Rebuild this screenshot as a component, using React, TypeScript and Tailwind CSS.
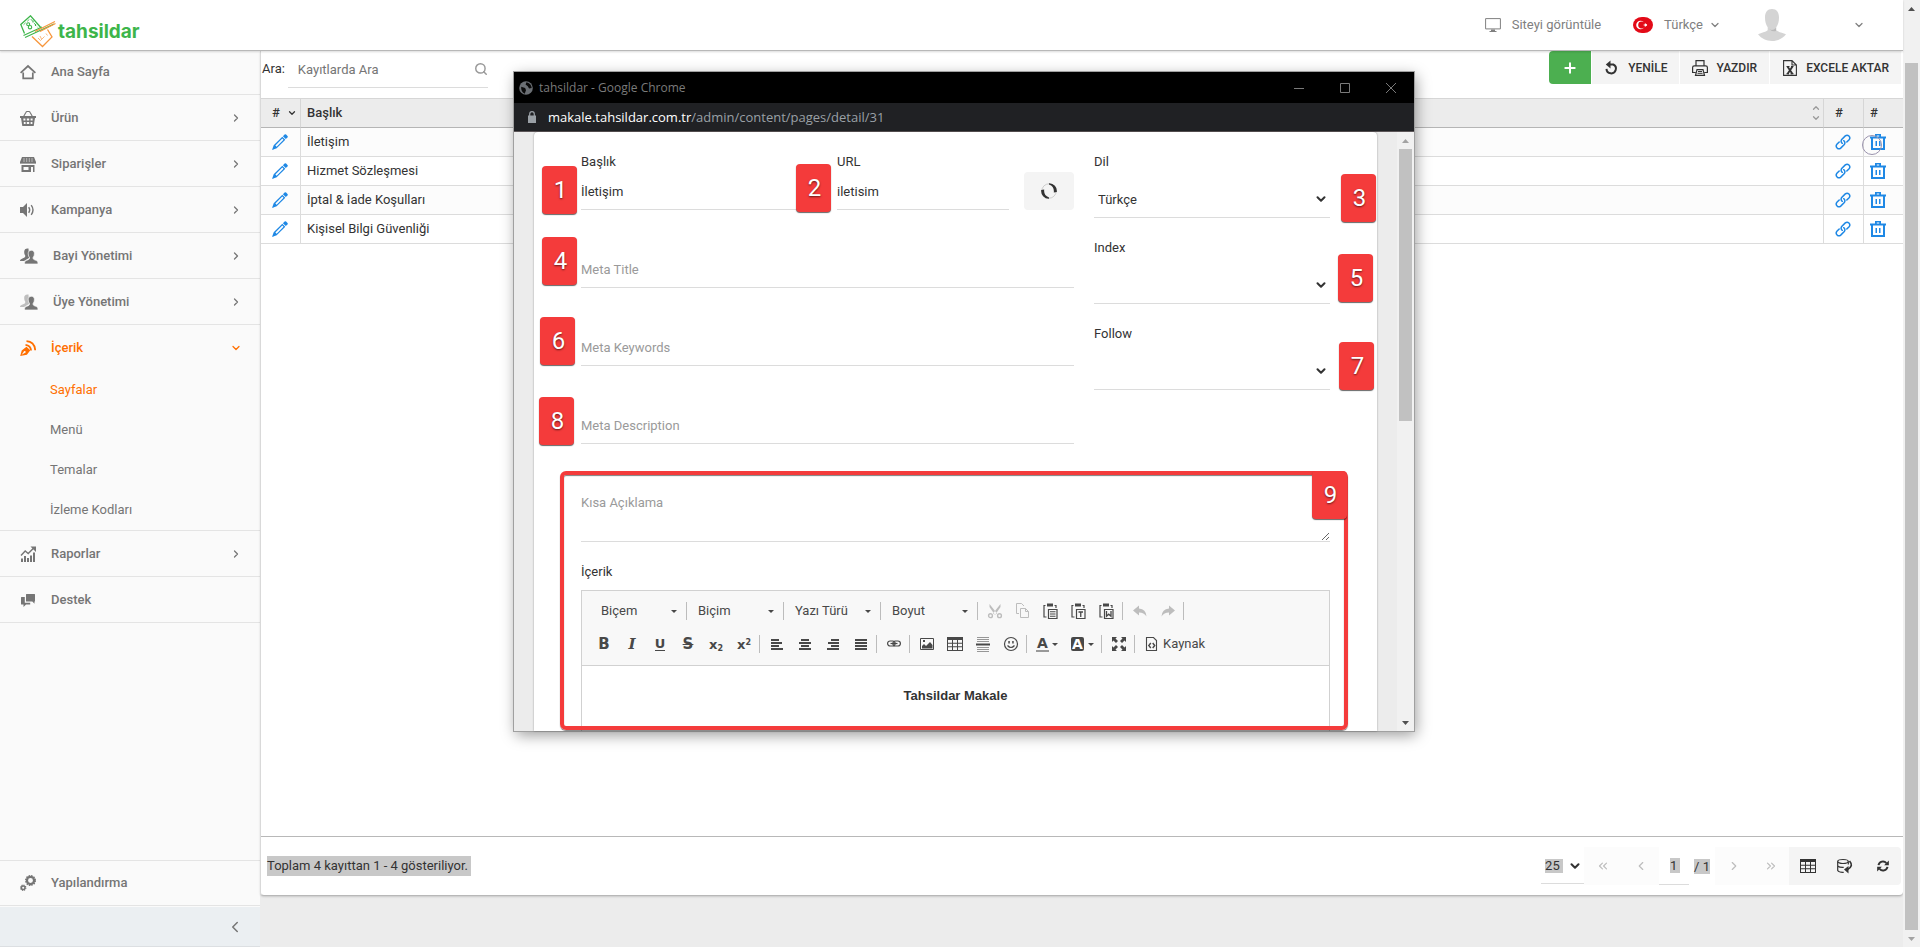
import type { ReactNode } from 'react'
import { ChevronDown, ChevronLeft, ChevronRight, ChevronsLeft, ChevronsRight, ChevronUp, Plus, Search } from 'lucide-react'
import { clsx } from 'clsx'

function Svg({ className = 'size-4', children }: { className?: string; children: ReactNode }) {
  return (
    <svg viewBox="0 0 16 16" className={clsx('shrink-0', className)} fill="currentColor" aria-hidden="true">
      {children}
    </svg>
  )
}

/* ---------- sidebar icons ---------- */

const HomeIcon = () => (
  <Svg>
    <path d="M.6 8.800 8 2l7.400 6.800M3.200 8.500v5.900h9.600V8.500" fill="none" stroke="currentColor" strokeWidth="1.700" />
  </Svg>
)

const BasketIcon = () => (
  <Svg>
    <path d="M3.600 6.500 6 2.200Q6.300 1.500 7 1.500h2q.7 0 1 .7l2.400 4.300" fill="none" stroke="currentColor" strokeWidth="1.100" />
    <path fillRule="evenodd" d="M0 6h16v2h-1l-1.300 8H2.300L1 8H0zM3.400 8.600v1.800h2V8.600zm3.400 0v1.800h2.400V8.600zm3.800 0v1.800h2V8.600zM3.800 12v2h1.800v-2zm3 0v2h2.400v-2zm3.800 0v2h1.800v-2z" />
  </Svg>
)

const StoreIcon = () => (
  <Svg>
    <path d="M2 1h12l2 5v1.200q-1 1-2 0-1 1-2 0-1 1-2 0-1 1-2 0-1 1-2 0-1 1-2 0-1 1-2 0-1 1-2 0V6z" />
    <path fillRule="evenodd" d="M1.500 9h13v7h-13zM3.500 11v3h5v-3zM11 11v5h2v-5z" />
    <path d="M4 2v4M6.700 2v4M9.300 2v4M12 2v4" stroke="#fafafa" strokeWidth=".5" />
  </Svg>
)

const SpeakerIcon = () => (
  <Svg>
    <path d="M0 5h3l4-4v14l-4-4H0z" />
    <path d="M8.700 5.200q2 2.800 0 5.600M11.200 3.200q3.600 4.800 0 9.600" fill="none" stroke="currentColor" strokeWidth="1.400" />
  </Svg>
)

function UsersIcon({ faded }: { faded?: boolean }) {
  return (
    <svg viewBox="0 0 18 16" className="h-4 w-[18px] shrink-0" fill="currentColor" aria-hidden="true">
      <path opacity={faded ? 0.45 : 1} d="M8.500.5C5.800 0 4 1.500 4.200 4c0 1.500.4 2.700 1 3.400.4 1.600-.4 2.300-3.200 3.300-1.500.5-2 1.200-2 2.300h4l5-3z" />
      <path stroke="#fafafa" strokeWidth=".7" d="M11.300 2.300c2.200 0 3.200 1.500 3.100 3.500 0 1.500-.5 2.900-1.300 3.700-.2 1.500.4 2 2.700 2.800 1.700.7 2.200 1.500 2.200 3.700H4.500c0-2.200.5-3 2.200-3.700 2.400-.8 3-1.300 2.800-2.800-.8-.8-1.300-2.200-1.300-3.700-.1-2 .9-3.500 3.100-3.500z" />
    </svg>
  )
}

const ContentIcon = () => (
  <Svg>
    <path fillRule="evenodd" d="m.2 15.900 1.500-5.400 4.800-3.800 3.800 3.600-3.400 4.500zM3.700 11.800l-2 3 3-1.900a1 1 0 1 0-1-1.100z" />
    <path d="M5.500 4.800q5.200.7 5.600 5.700M6.500 1.200q8 .6 8.700 9" fill="none" stroke="currentColor" strokeWidth="1.800" />
  </Svg>
)

const ReportsIcon = () => (
  <Svg>
    <path d="M1 9.500 5.200 5l3 2.500L14 1.800" fill="none" stroke="currentColor" strokeWidth="1.400" />
    <path d="M10.500.500H16V6zM1 12.500h2V16H1zM4 10h2v6H4zM7 12h2v4H7zM10 9.500h2V16h-2zM13 6.500h2V16h-2z" />
  </Svg>
)

const SupportIcon = () => (
  <Svg>
    <path d="M6.500 2h8q.5 0 .5.500v6.500q0 .500-.500.500v2.200L12.300 9.500H6.500Q6 9.500 6 9V2.500Q6 2 6.500 2z" />
    <path d="M1.500 5h3.300v5.700h5.400v1.800H6L3.500 15v-2.500h-2Q1 12.500 1 12V5.500Q1 5 1.500 5z" />
  </Svg>
)

const GearsIcon = () => (
  <Svg>
    <circle cx="10.500" cy="5.500" r="3.600" fill="none" stroke="currentColor" strokeWidth="2.300" />
    <circle cx="10.500" cy="5.500" r="4.800" fill="none" stroke="currentColor" strokeWidth="1.400" strokeDasharray="1.500 1.013" />
    <circle cx="3.200" cy="12.700" r="1.800" fill="none" stroke="currentColor" strokeWidth="1.500" />
    <circle cx="3.200" cy="12.700" r="2.600" fill="none" stroke="currentColor" strokeWidth="1.200" strokeDasharray="1.100 .942" />
  </Svg>
)

/* ---------- header and toolbar icons ---------- */

function Logo() {
  return (
    <svg viewBox="0 0 36 33" className="h-[33px] w-9" fill="none" aria-hidden="true">
      <path d="M4.500 18.500.8 9.500 10.500.8l10 11.500" stroke="#3db54a" strokeWidth="1.300" />
      <path d="M3.500 9.800 10.300 3.500l7.500 9" stroke="#3db54a" strokeWidth=".8" strokeDasharray="3 2" />
      <circle cx="8.200" cy="9.300" r="1.500" stroke="#3db54a" strokeWidth="1.100" />
      <circle cx="10" cy="12.200" r="1.700" stroke="#3db54a" strokeWidth="1.100" />
      <path d="M13 5.500v2M15.500 9v2M3.500 20.500 22 12M5 22.500 34 9" stroke="#3db54a" strokeWidth="1.100" />
      <path d="M15 16.500 35 6.500M20 16.500l15.500-8" stroke="#f7963c" strokeWidth="1.200" />
      <path d="m12 21.500 10.500 10L32 22l-4.500-7.500" stroke="#f7963c" strokeWidth="1.300" />
      <path d="m18 23 2.500 2.500 4-4M20 21l1.500 3M26 18.500l1.500 2" stroke="#f9b87d" strokeWidth="1" />
    </svg>
  )
}

const MonitorIcon = () => (
  <Svg>
    <path d="M.6 1.600h14.800v10.300H.6z" fill="none" stroke="currentColor" strokeWidth="1" />
    <path d="M6 12.500h4V14h1.500v1h-7v-1H6z" />
  </Svg>
)

const FlagIcon = () => (
  <svg viewBox="0 0 20 16" className="h-4 w-5 shrink-0" aria-hidden="true">
    <rect width="20" height="16" rx="9" ry="8" fill="#e30a17" />
    <circle cx="7.500" cy="8" r="4.300" fill="#fff" />
    <circle cx="8.600" cy="8" r="3.400" fill="#e30a17" />
    <path d="m10 8 2-.7.2-1.200.8 1 1.200-.2-.7 1.100.7 1.100-1.200-.2-.8 1-.2-1.200z" fill="#fff" />
  </svg>
)

const Avatar = () => (
  <svg viewBox="0 0 28 32" className="h-8 w-7 shrink-0" fill="#d4d4d4" aria-hidden="true">
    <path d="M14 0c4.600 0 7 3.200 7 8.500 0 4-1 7.500-2.700 9.800v3c2 1.900 6.200 2.200 9.700 4C24.500 29.800 19.500 32 14 32S3.500 29.800 0 25.300c3.500-1.800 7.700-2.100 9.700-4v-3C8 16 7 12.500 7 8.500 7 3.200 9.400 0 14 0z" />
    <path d="M10.500 19.500q3.500 3 7.500-.5v3q-4 1-7.500-2.500z" fill="#b9b9b9" />
  </svg>
)

const UndoIcon = () => (
  <Svg>
    <path d="M5 4.500h4.300a4.700 4.700 0 1 1-6.800 4.400" fill="none" stroke="currentColor" strokeWidth="2" />
    <path d="M6.500.500v8L1.800 4.500z" />
  </Svg>
)

const PrinterIcon = () => (
  <Svg>
    <path d="M4 5.500V.6h8v4.900M3.500 12.500H.6V7.500q0-1.700 1.700-1.700h11.400q1.700 0 1.700 1.700v5h-2.900M3.500 15.400 5 9.700h6l1.500 5.700z" fill="none" stroke="currentColor" strokeWidth="1.200" />
    <path d="M6 11.500h4M5.500 13.300h5" stroke="currentColor" strokeWidth="1" />
  </Svg>
)

const ExcelIcon = () => (
  <Svg>
    <path d="M1.600.6H10l4.400 4.400v10.400H1.600zM10 .6v4.400h4.400" fill="none" stroke="currentColor" strokeWidth="1.100" />
    <path d="m5.500 6.500 5 7.500M10.500 6.500l-5 7.500" stroke="currentColor" strokeWidth="1.900" />
    <path d="M4.500 6.500h3M9 6.500h2.500M4.500 13.800h2.500M8.500 13.800h3" stroke="currentColor" strokeWidth="1" />
  </Svg>
)

const PencilIcon = () => (
  <Svg>
    <path d="m10.900 2.200 1.700-1.700q.7-.7 1.500 0l1.400 1.400q.7.8 0 1.500l-1.700 1.700z" />
    <path fillRule="evenodd" d="m10.300 2.700 3 3-8.600 8.600L0 16l1.700-4.700zm0 1.900-6.900 6.900 1.200 1.200 6.900-6.900z" />
  </Svg>
)

const LinkIcon = () => (
  <Svg>
    <g fill="none" stroke="currentColor" strokeWidth="1.500" strokeLinecap="round">
      <path d="M7.300 9.300a2.600 2.600 0 0 1-.6-3.800l3.600-3.600a2.700 2.700 0 0 1 3.800 3.800l-2.300 2.300" />
      <path d="M8.700 6.700a2.600 2.600 0 0 1 .6 3.800l-3.600 3.600a2.700 2.700 0 0 1-3.800-3.800L4.200 8" />
    </g>
  </Svg>
)

const TrashIcon = () => (
  <Svg>
    <path fillRule="evenodd" d="M5 0h6v2.500h5v2h-1V16H1V4.500H0v-2h5zm1.800 1.500v1h2.400v-1zM3 4.500V14h10V4.500z" />
    <path d="M5.500 7H7v5H5.500zM9 7h1.500v5H9z" />
  </Svg>
)

const GridIcon = () => (
  <Svg>
    <path fillRule="evenodd" d="M0 1h16v14H0zm1 3v2.700h4V4zm5 0v2.700h4V4zm5 0v2.700h4V4zM1 7.700v2.600h4V7.700zm5 0v2.600h4V7.700zm5 0v2.600h4V7.700zM1 11.300V14h4v-2.700zm5 0V14h4v-2.700zm5 0V14h4v-2.700z" />
  </Svg>
)

const DatabaseIcon = () => (
  <Svg>
    <ellipse cx="6" cy="3.500" rx="5.300" ry="2" fill="none" stroke="currentColor" strokeWidth="1.200" />
    <path d="M.7 3.500v9q1.300 2 6 1.800M.7 8q2 1.700 6 1.400M11.300 3.500v3" fill="none" stroke="currentColor" strokeWidth="1.200" />
    <path d="M12.500 3q4.500 5-2 8.500" fill="none" stroke="currentColor" strokeWidth="1.800" />
    <path d="M7 11.500 11.500 8v7.500z" />
  </Svg>
)

const RefreshIcon = () => (
  <Svg className="size-3">
    <path d="M2 6.800a6 6 0 0 1 10.500-2.600M14 9.200a6 6 0 0 1-10.500 2.600" fill="none" stroke="currentColor" strokeWidth="2.600" />
    <path d="M15.800.8v6.200H9.500zM.2 15.200V9h6.300z" />
  </Svg>
)

/* ---------- editor icons ---------- */

const CutIcon = () => (
  <Svg>
    <path d="m2.500 1 7.500 9.500-2 1.500L2.500 4zM13.500 1 6 10.500 8 12l5.500-8z" />
    <circle cx="3.500" cy="12.700" r="1.900" fill="none" stroke="currentColor" strokeWidth="1.400" />
    <circle cx="12.500" cy="12.700" r="1.900" fill="none" stroke="currentColor" strokeWidth="1.400" />
  </Svg>
)

const CopyIcon = () => (
  <Svg>
    <path d="M4 10.500H1.500v-10h5L9 3M5.500 5.500h5l3 3v6h-8zM10.500 5.500v3h3" fill="none" stroke="currentColor" strokeWidth="1" />
  </Svg>
)

function PasteIcon({ children }: { children: ReactNode }) {
  return (
    <Svg>
      <path d="M4 .5h6v3H4z" />
      <path d="M2.500 2.500H1v11.500h2.500M11.500 2.500H13V5M5.500 6.500H14v9H5.500z" fill="none" stroke="currentColor" strokeWidth="1.200" />
      {children}
    </Svg>
  )
}

const UndoArrow = ({ flip }: { flip?: boolean }) => (
  <Svg className={flip ? 'size-4 -scale-x-100' : 'size-4'}>
    <path d="M1 7.500 7 2.500v3q7 .5 7.500 8Q12 9.500 7 9.500v3z" />
  </Svg>
)

function Letter({ children, className = "font-['DejaVu_Sans'] text-[15px]" }: { children: ReactNode; className?: string }) {
  return <span className={clsx('leading-none font-bold', className)}>{children}</span>
}

function AlignIcon({ d }: { d: string }) {
  return (
    <Svg>
      <path d={d} stroke="currentColor" strokeWidth="2" />
    </Svg>
  )
}

const ChainIcon = () => (
  <Svg>
    <rect x="1.600" y="5" width="7.500" height="5" rx="2.500" fill="none" stroke="currentColor" strokeWidth="1.200" />
    <rect x="6.900" y="5" width="7.500" height="5" rx="2.500" fill="none" stroke="currentColor" strokeWidth="1.200" />
    <path d="M4.500 7.500h7" stroke="currentColor" strokeWidth="1.200" />
  </Svg>
)

const ImageIcon = () => (
  <Svg>
    <path d="M1.500 2.500h13v11h-13z" fill="none" stroke="currentColor" strokeWidth="1" />
    <path d="M3 12.500V10l2-2 2 2 4-4 2.500 3v3.500zM4 4h2v2H4z" />
  </Svg>
)

const RuleIcon = () => (
  <Svg>
    <path d="M2 1.500h12M2 3.500h12M2 5.500h12M2 11.500h12M2 13.500h12M2 15.500h12" stroke="currentColor" strokeWidth="1" opacity=".55" />
    <path d="M1 8.500h14" stroke="currentColor" strokeWidth="2" />
  </Svg>
)

const SmileIcon = () => (
  <Svg>
    <circle cx="8" cy="8" r="6.500" fill="none" stroke="currentColor" strokeWidth="1.200" />
    <path d="M5.300 5h1.500v2.500H5.300zM9.200 5h1.500v2.500H9.200z" />
    <path d="M4.500 9.500q3.500 4 7 0" fill="none" stroke="currentColor" strokeWidth="1.200" />
  </Svg>
)

const MaximizeIcon = () => (
  <Svg>
    <path d="M1 1h5L4.500 2.500 7 5 5 7 2.500 4.500 1 6zM15 1h-5l1.500 1.500L9 5l2 2 2.500-2.500L15 6zM1 15h5l-1.500-1.500L7 11 5 9l-2.500 2.500L1 10zM15 15h-5l1.500-1.500L9 11l2-2 2.500 2.500L15 10z" />
  </Svg>
)

const SourceIcon = () => (
  <Svg>
    <path d="M2.500 1.500h7l3 3v10h-10z" fill="none" stroke="currentColor" strokeWidth="1.100" />
    <path d="M6.800 7 4.800 9.500l2 2.500M8.700 7l2 2.500-2 2.500" fill="none" stroke="currentColor" strokeWidth="1.400" />
  </Svg>
)

const SpinIcon = () => (
  <Svg>
    <circle cx="8" cy="8" r="7.200" fill="none" stroke="#c4c4c4" strokeWidth=".8" />
    <path d="M8 .3A7.700 7.700 0 0 1 15.800 9l-3 .5Q13.500 3.500 8 1.500zM8 15.700A7.700 7.700 0 0 1 .2 7l3-.5Q2.500 12.500 8 14.500z" />
  </Svg>
)

const Caret = () => (
  <svg viewBox="0 0 6 3" className="h-[3px] w-1.5 shrink-0" fill="currentColor" aria-hidden="true">
    <path d="M0 0h6L3 3z" />
  </svg>
)

/* ---------- page ---------- */

interface MenuItem {
  label: string
  icon: ReactNode
  sub?: boolean
}

const topMenu: MenuItem[] = [
  { label: 'Ana Sayfa', icon: <HomeIcon /> },
  { label: 'Ürün', icon: <BasketIcon />, sub: true },
  { label: 'Siparişler', icon: <StoreIcon />, sub: true },
  { label: 'Kampanya', icon: <SpeakerIcon />, sub: true },
  { label: 'Bayi Yönetimi', icon: <UsersIcon />, sub: true },
  { label: 'Üye Yönetimi', icon: <UsersIcon faded />, sub: true },
]

const contentMenu = ['Sayfalar', 'Menü', 'Temalar', 'İzleme Kodları']

const pages = ['İletişim', 'Hizmet Sözleşmesi', 'İptal & İade Koşulları', 'Kişisel Bilgi Güvenliği']

function MenuRow({ item, className = 'h-[46px]' }: { item: MenuItem; className?: string }) {
  return (
    <a href="#" className={clsx('flex items-center gap-[15px] border-b border-[#e4e4e4] pr-[18px] pl-5 font-medium', className)}>
      {item.icon}
      <span className="flex-1">{item.label}</span>
      {item.sub && <ChevronRight className="size-3" strokeWidth={2.5} />}
    </a>
  )
}

function Sidebar() {
  return (
    <aside className="flex w-[260px] shrink-0 flex-col bg-[#fafafa] text-[#757575]">
      <nav>
        {topMenu.map((item, i) => (
          <MenuRow key={item.label} item={item} className={i === 0 ? 'h-[44px] pb-0.5' : undefined} />
        ))}
        <div className="border-b border-[#e4e4e4]">
          <a href="#" className="flex h-[45px] items-center gap-[15px] pr-[18px] pl-5 font-medium text-[#ff6f00]">
            <ContentIcon />
            <span className="flex-1">İçerik</span>
            <ChevronDown className="size-3" strokeWidth={2.5} />
          </a>
          {contentMenu.map((label, i) => (
            <a key={label} href="#" className={clsx('flex h-10 items-center pl-[50px]', i === 0 && 'text-[#ff6f00]')}>
              {label}
            </a>
          ))}
        </div>
        <MenuRow item={{ label: 'Raporlar', icon: <ReportsIcon />, sub: true }} />
        <MenuRow item={{ label: 'Destek', icon: <SupportIcon /> }} />
      </nav>
      <div className="mt-auto">
        <MenuRow item={{ label: 'Yapılandırma', icon: <GearsIcon /> }} className="h-[46px] border-t" />
        <button type="button" aria-label="Menüyü daralt" className="mt-px flex h-10 w-full items-center justify-end border-b border-[#dcdfe2] bg-[#ebeff2] pr-4">
          <ChevronLeft className="size-[18px]" strokeWidth={2} />
        </button>
      </div>
    </aside>
  )
}

function Header() {
  return (
    <header className="relative z-10 flex h-[51px] shrink-0 items-center border-b border-[#b8b8b8] bg-white pr-[38px] pl-5 text-[#808080] shadow-[0_1px_2px_rgba(0,0,0,0.15)]">
      <a href="#" className="flex items-center gap-0.5 pt-3">
        <Logo />
        <span className="pt-0.5 font-['Inter'] text-[19px] leading-6 font-bold text-[#3db54a]">tahsildar</span>
      </a>
      <div className="ml-auto flex items-center">
        <a href="#" className="flex items-center gap-[11px]">
          <MonitorIcon />
          Siteyi görüntüle
        </a>
        <button type="button" className="ml-8 flex items-center gap-[11px]">
          <FlagIcon />
          <span className="flex items-center gap-1.5">
            Türkçe
            <ChevronDown className="size-3" strokeWidth={2.5} />
          </span>
        </button>
        <button type="button" aria-label="Hesap" className="ml-[37px] flex items-center gap-[67px]">
          <Avatar />
          <ChevronDown className="size-3" strokeWidth={2.5} />
        </button>
      </div>
    </header>
  )
}

function ToolbarButton({ icon, label }: { icon: ReactNode; label: string }) {
  return (
    <button type="button" className="flex h-[33px] items-center gap-2 bg-[#f4f4f4] px-3 text-xs font-medium">
      {icon}
      {label}
    </button>
  )
}

function Toolbar() {
  return (
    <div className="flex h-[47px] shrink-0 items-start pr-0.5 pl-px">
      <label htmlFor="search" className="leading-9">Ara:</label>
      <div className="ml-[3px] flex h-[37px] w-[200px] items-center border-b border-[#dcdcdc]">
        <input id="search" type="text" placeholder="Kayıtlarda Ara" className="w-0 flex-1 pt-0.5 pl-2.5 outline-none placeholder:text-[#757575]" />
        <Search className="size-[14px] text-[#999]" strokeWidth={2.5} />
      </div>
      <div className="ml-auto flex gap-px">
        <button type="button" aria-label="Ekle" className="flex h-[33px] w-[42px] items-center justify-center rounded-l-sm bg-[#4caf50] text-white">
          <Plus className="size-4" strokeWidth={3} />
        </button>
        <ToolbarButton icon={<UndoIcon />} label="YENİLE" />
        <ToolbarButton icon={<PrinterIcon />} label="YAZDIR" />
        <ToolbarButton icon={<ExcelIcon />} label="EXCELE AKTAR" />
      </div>
    </div>
  )
}

function PagesTable() {
  return (
    <table className="w-full table-fixed border-separate border-spacing-0">
      <colgroup>
        <col className="w-10" />
        <col />
        <col className="w-10" />
        <col className="w-[39px]" />
      </colgroup>
      <thead>
        <tr className="bg-[#ececec] text-left [&>th]:h-[30px] [&>th]:border-t [&>th]:border-b [&>th]:border-t-[#d6d6d6] [&>th]:border-b-[#b5b5b5] [&>th]:border-r-[#d6d6d6] [&>th]:font-medium">
          <th className="border-r pr-[3px] pl-[11px]">
            <span className="flex items-center justify-between">
              #
              <ChevronDown className="size-2.5" strokeWidth={3} />
            </span>
          </th>
          <th className="border-r pr-0.5 pl-1.5">
            <span className="flex items-center justify-between">
              Başlık
              <span className="flex flex-col text-[#999]">
                <ChevronUp className="size-2.5" strokeWidth={3} />
                <ChevronDown className="size-2.5" strokeWidth={3} />
              </span>
            </span>
          </th>
          <th className="border-r pl-[11px]">#</th>
          <th className="pl-1.5">#</th>
        </tr>
      </thead>
      <tbody>
        {pages.map((title, i) => (
          <tr key={title} className="odd:bg-[#fcfcfc] [&>td]:h-[29px] [&>td]:border-b [&>td]:border-[#dcdcdc]">
            <td className="border-r pl-[11px]">
              <button type="button" aria-label="Düzenle" className="block text-[#1e88e5]"><PencilIcon /></button>
            </td>
            <td className="border-r pl-1.5">{title}</td>
            <td className="border-r pl-[11px]">
              <a href="#" aria-label="Bağlantı" className="block text-[#1e88e5]"><LinkIcon /></a>
            </td>
            <td className="relative pl-1.5">
              <button type="button" aria-label="Sil" className="block text-[#1e88e5]"><TrashIcon /></button>
              {/* busy cursor ring */}
              {i === 0 && <span className="absolute top-[7px] -left-0.5 size-5 rounded-full border border-[#9a93ad]" />}
            </td>
          </tr>
        ))}
      </tbody>
    </table>
  )
}

function Pager() {
  return (
    <div className="flex h-[38px] items-center">
      <div className="relative flex h-9 items-center border-b border-[#dcdcdc]">
        <select aria-label="Sayfa boyutu" defaultValue="25" className="h-full w-[43px] appearance-none pl-1 text-transparent outline-none">
          <option value="25">25</option>
        </select>
        <span className="pointer-events-none absolute left-1 bg-[#c8c8c8] pr-[3px] leading-[14px]">25</span>
        <ChevronDown className="pointer-events-none absolute right-0.5 size-3.5" strokeWidth={3.5} />
      </div>
      <div className="flex h-full items-center bg-[#fcfcfc] text-[#bdbdbd]">
        <button type="button" aria-label="İlk" className="flex w-[38px] justify-center"><ChevronsLeft className="size-3.5" /></button>
        <button type="button" aria-label="Önceki" className="flex w-[37px] justify-center"><ChevronLeft className="size-3.5" /></button>
      </div>
      <div className="flex h-full w-[30px] items-center justify-center border-b border-[#dcdcdc] pl-0.5">
        <span className="bg-[#c8c8c8] pr-[3px] leading-[15px]">1</span>
      </div>
      <span className="mr-[5px] ml-[5px] bg-[#c8c8c8] leading-[15px]">/ 1</span>
      <div className="flex h-full items-center bg-[#fcfcfc] text-[#bdbdbd]">
        <button type="button" aria-label="Sonraki" className="flex w-[37px] justify-center"><ChevronRight className="size-3.5" /></button>
        <button type="button" aria-label="Son" className="flex w-[37px] justify-center"><ChevronsRight className="size-3.5" /></button>
      </div>
      <div className="flex h-full items-center rounded-r-sm bg-[#f4f4f4]">
        <button type="button" aria-label="Sütunlar" className="flex w-[37px] justify-center"><GridIcon /></button>
        <button type="button" aria-label="Önbellek" className="flex w-[38px] justify-center"><DatabaseIcon /></button>
        <button type="button" aria-label="Yenile" className="flex w-[37px] justify-center"><RefreshIcon /></button>
      </div>
    </div>
  )
}

function Scrollbar({ dimUp, thumb }: { dimUp?: boolean; thumb: string }) {
  return (
    <div className="flex w-[17px] shrink-0 flex-col items-center bg-[#f1f1f1] text-[#505050]">
      <svg viewBox="0 0 17 17" className={clsx('size-[17px] shrink-0', dimUp && 'text-[#a3a3a3]')} fill="currentColor" aria-hidden="true">
        <path d="M5 11h7L8.500 7z" />
      </svg>
      <div className="flex w-full flex-1 flex-col items-center">
        <div className={clsx('w-[13px] bg-[#c1c1c1]', thumb)} />
      </div>
      <svg viewBox="0 0 17 17" className={clsx('size-[17px] shrink-0', !dimUp && 'text-[#a3a3a3]')} fill="currentColor" aria-hidden="true">
        <path d="M5 7h7l-3.500 4z" />
      </svg>
    </div>
  )
}

/* ---------- popup window ---------- */

function TextField({ id, label, value, className }: { id: string; label: string; value: string; className?: string }) {
  return (
    <div className={className}>
      <label htmlFor={id} className="block leading-5">{label}</label>
      <input id={id} type="text" defaultValue={value} className="block h-[38px] w-full border-b border-[#dcdcdc] pt-0.5 outline-none" />
    </div>
  )
}

function MetaField({ label }: { label: string }) {
  return (
    <input
      type="text"
      aria-label={label}
      placeholder={label}
      className="h-[38px] w-full border-b border-[#dcdcdc] pt-0.5 outline-none placeholder:text-[#9a9a9a]"
    />
  )
}

function SelectField({ id, label, value }: { id: string; label: string; value: string }) {
  return (
    <div>
      <label htmlFor={id} className="mb-2 block leading-5">{label}</label>
      <div className="relative">
        <select id={id} defaultValue={value} className="block h-[38px] w-full appearance-none border-b border-[#dcdcdc] bg-white pt-0.5 pl-1 outline-none">
          <option value={value}>{value}</option>
        </select>
        <ChevronDown className="pointer-events-none absolute top-3 right-0.5 size-3.5" strokeWidth={3.5} />
      </div>
    </div>
  )
}

function Tool({ label, disabled, children }: { label: string; disabled?: boolean; children: ReactNode }) {
  return (
    <button type="button" aria-label={label} disabled={disabled} className="flex w-7 items-center justify-center disabled:text-[#bdbdbd]">
      {children}
    </button>
  )
}

const Separator = () => <span className="mr-[3px] ml-px h-[18px] w-px bg-[#bcbcbc]" />

function Combo({ label }: { label: string }) {
  return (
    <>
      <button type="button" className="flex w-24 items-center justify-between pr-[9px] pl-[11px]">
        {label}
        <Caret />
      </button>
      <span className="h-[18px] w-px bg-[#bcbcbc]" />
    </>
  )
}

function Editor() {
  return (
    <div className="mt-2 border border-[#d1d1d1]">
      <div className="flex flex-col gap-[15px] border-b border-[#d1d1d1] bg-[#f8f8f8] pt-[11px] pb-3 pl-2 text-[#484848]">
        <div className="flex h-[18px] items-center">
          <Combo label="Biçem" />
          <Combo label="Biçim" />
          <Combo label="Yazı Türü" />
          <Combo label="Boyut" />
          <span className="w-[3px]" />
          <Tool label="Kes" disabled><CutIcon /></Tool>
          <Tool label="Kopyala" disabled><CopyIcon /></Tool>
          <Tool label="Yapıştır">
            <PasteIcon><path d="M7 8.800h5.500M7 11h5.500M7 13.200h5.500" stroke="currentColor" strokeWidth="1.100" /></PasteIcon>
          </Tool>
          <Tool label="Düz metin yapıştır">
            <PasteIcon><path d="M7.500 9H12M9.750 9v5" stroke="currentColor" strokeWidth="1.300" /></PasteIcon>
          </Tool>
          <Tool label="Word'den yapıştır">
            <PasteIcon><path d="M7.500 8v5.200l2.200-2 2.300 2V8" fill="none" stroke="currentColor" strokeWidth="1.300" /></PasteIcon>
          </Tool>
          <Separator />
          <Tool label="Geri al" disabled><UndoArrow /></Tool>
          <Tool label="Yinele" disabled><UndoArrow flip /></Tool>
          <Separator />
        </div>
        <div className="flex h-[18px] items-center">
          <Tool label="Kalın"><Letter>B</Letter></Tool>
          <Tool label="İtalik"><Letter className="font-['DejaVu_Serif'] text-[15px] italic">I</Letter></Tool>
          <Tool label="Altı çizili"><Letter className="border-b border-[#484848] font-['DejaVu_Sans'] text-[13px]">U</Letter></Tool>
          <Tool label="Üstü çizili"><Letter className="font-['DejaVu_Sans'] text-[15px] line-through">S</Letter></Tool>
          <Tool label="Alt simge"><Letter className="font-['DejaVu_Sans'] text-[13px]">x<sub className="text-[8px]">2</sub></Letter></Tool>
          <Tool label="Üst simge"><Letter className="font-['DejaVu_Sans'] text-[13px]">x<sup className="text-[8px]">2</sup></Letter></Tool>
          <Separator />
          <Tool label="Sola hizala"><AlignIcon d="M2 4h8M2 7h11M2 10h8M2 13h12" /></Tool>
          <Tool label="Ortala"><AlignIcon d="M4 4h8M2 7h12M4 10h8M2 13h12" /></Tool>
          <Tool label="Sağa hizala"><AlignIcon d="M6 4h8M3 7h11M6 10h8M2 13h12" /></Tool>
          <Tool label="İki yana yasla"><AlignIcon d="M2 4h12M2 7h12M2 10h12M2 13h12" /></Tool>
          <Separator />
          <Tool label="Bağlantı"><ChainIcon /></Tool>
          <Separator />
          <Tool label="Resim"><ImageIcon /></Tool>
          <Tool label="Tablo"><GridIcon /></Tool>
          <Tool label="Yatay çizgi"><RuleIcon /></Tool>
          <Tool label="İfade"><SmileIcon /></Tool>
          <Separator />
          <button type="button" aria-label="Yazı rengi" className="flex w-[35px] items-center gap-[3px] pl-1.5">
            <span className="border-b-2 border-[#999] px-px font-['DejaVu_Sans'] text-sm leading-[13px] font-bold">A</span>
            <Caret />
          </button>
          <button type="button" aria-label="Arka plan rengi" className="flex w-[35px] items-center gap-1 pl-1.5">
            <span className="rounded-xs bg-[#484848] px-px font-['DejaVu_Sans'] text-sm leading-[14px] font-bold text-white">A</span>
            <Caret />
          </button>
          <Separator />
          <Tool label="Büyüt"><MaximizeIcon /></Tool>
          <Separator />
          <button type="button" className="flex items-center gap-[3px] pl-1.5">
            <SourceIcon />
            Kaynak
          </button>
        </div>
      </div>
      <div className="h-40 pt-5 text-center font-['Liberation_Sans'] leading-5 font-bold">Tahsildar Makale</div>
    </div>
  )
}

// numbered callouts, placed over the form
const marks = [
  { n: 1, pos: 'left-7 top-[94px]' },
  { n: 2, pos: 'left-[282px] top-[92px]' },
  { n: 3, pos: 'left-[827px] top-[102px]' },
  { n: 4, pos: 'left-7 top-[165px]' },
  { n: 5, pos: 'left-[824px] top-[182px]' },
  { n: 6, pos: 'left-[26px] top-[245px]' },
  { n: 7, pos: 'left-[825px] top-[270px]' },
  { n: 8, pos: 'left-[25px] top-[325px]' },
  { n: 9, pos: 'left-[798px] top-[399px]' },
]

function PopupWindow() {
  return (
    <section className="absolute top-[72px] left-[514px] z-20 flex h-[659px] w-[900px] flex-col bg-[#ececec] shadow-[0_0_0_1px_#a0a0a0,2px_4px_14px_rgba(0,0,0,0.4)]">
      <div className="flex h-[31px] shrink-0 items-center bg-black pr-[18px] pl-[5px] font-['Open_Sans'] text-xs text-[#7a7a7a]">
        <svg viewBox="0 0 16 16" className="mr-1.5 size-3.5" aria-hidden="true">
          <circle cx="8" cy="8" r="7.800" fill="#6b6f74" />
          <path d="M2.500 6.500 7 8l1 2.500-1.500 4Q2 12 2.500 6.500zM8.500 1.500 7.500 4l2.500 2 1.500 2.500 3-.5Q14 3 8.500 1.500z" fill="#0a0a0a" />
        </svg>
        <h2 className="flex-1">tahsildar - Google Chrome</h2>
        <div className="flex items-center gap-9">
          <svg viewBox="0 0 10 10" className="size-2.5" stroke="currentColor" aria-hidden="true"><path d="M0 5.500h10" /></svg>
          <svg viewBox="0 0 10 10" className="size-2.5" stroke="currentColor" fill="none" aria-hidden="true"><path d="M.5.500h9v9h-9z" /></svg>
          <svg viewBox="0 0 10 10" className="size-2.5" stroke="currentColor" aria-hidden="true"><path d="m0 0 10 10M10 0 0 10" /></svg>
        </div>
      </div>
      <div className="flex h-[29px] shrink-0 items-center gap-3 border-b border-[#5c5658] bg-[#202124] pl-3.5 font-['Open_Sans'] text-[13px] text-[#9aa0a6]">
        <svg viewBox="0 0 8 12" className="h-3 w-2" fill="currentColor" aria-hidden="true">
          <path d="M0 4.500h8V12H0z" />
          <path d="M1.700 5V3a2.300 2.300 0 0 1 4.600 0v2" fill="none" stroke="currentColor" strokeWidth="1.200" />
        </svg>
        <p><span className="text-white">makale.tahsildar.com.tr</span>/admin/content/pages/detail/31</p>
      </div>
      <div className="flex min-h-0 flex-1">
        <form className="mx-5 min-w-0 flex-1 overflow-hidden rounded-t-sm bg-white px-[47px] pt-5 shadow-[0_0_2px_rgba(0,0,0,0.4)]">
          <div className="grid grid-cols-[1fr_236px] gap-5">
            <div className="flex min-w-0 flex-col gap-10">
              <div className="flex items-end">
                <TextField id="title" label="Başlık" value="İletişim" className="w-[236px]" />
                <TextField id="url" label="URL" value="iletisim" className="mr-[15px] ml-5 min-w-0 flex-1" />
                <button type="button" aria-label="URL oluştur" className="flex h-[38px] w-[50px] items-center justify-center rounded-sm bg-[#f4f4f4]">
                  <SpinIcon />
                </button>
              </div>
              <MetaField label="Meta Title" />
              <MetaField label="Meta Keywords" />
              <MetaField label="Meta Description" />
            </div>
            <div className="flex flex-col gap-5">
              <SelectField id="lang" label="Dil" value="Türkçe" />
              <SelectField id="index" label="Index" value="" />
              <SelectField id="follow" label="Follow" value="" />
            </div>
          </div>
          <textarea
            aria-label="Kısa Açıklama"
            placeholder="Kısa Açıklama"
            className="mt-10 block h-[58px] w-full resize-y border-b border-[#dcdcdc] pt-[9px] leading-5 outline-none placeholder:text-[#9a9a9a]"
          />
          <p className="mt-5 leading-5">İçerik</p>
          <Editor />
        </form>
        <Scrollbar dimUp thumb="h-[272px]" />
      </div>

      <div className="pointer-events-none absolute top-[399px] left-[46px] h-[259px] w-[788px] rounded-md border-4 border-[#f43b3b] shadow-[0_1px_1px_rgba(0,0,0,0.5),inset_0_1px_1px_rgba(0,0,0,0.5)]" />
      {marks.map((m) => (
        <span
          key={m.n}
          className={clsx(
            'absolute flex h-12 w-[35px] items-center justify-center rounded-sm bg-[#f43b3b] pl-0.5 text-2xl text-white shadow-[0_1px_1px_rgba(0,0,0,0.6)] [text-shadow:0_1px_2px_rgba(0,0,0,0.6)]',
            m.pos,
          )}
        >
          {m.n}
        </span>
      ))}
    </section>
  )
}

export default function App() {
  return (
    <div className="relative flex h-screen w-full overflow-hidden bg-[#ececec] font-['Roboto',sans-serif] text-[13px] leading-5 text-[#333]">
      <div className="flex min-w-0 flex-1 flex-col">
        <Header />
        <div className="flex min-h-0 flex-1">
          <Sidebar />
          <main className="mb-[51px] flex min-w-0 flex-1 flex-col rounded-b-sm border-b border-l border-b-[#b8b8b8] border-l-[#d9d9d9] bg-white shadow-[0_1px_2px_rgba(0,0,0,0.15)]">
            <Toolbar />
            <PagesTable />
            <footer className="mt-auto flex h-[59px] items-center justify-between border-t border-[#b8b8b8] pr-0.5 pl-1.5">
              <p className="bg-[#c8c8c8] pr-[3px]">Toplam 4 kayıttan 1 - 4 gösteriliyor.</p>
              <Pager />
            </footer>
          </main>
        </div>
      </div>
      <Scrollbar thumb="mt-[46px] flex-1" />
      <PopupWindow />
    </div>
  )
}
